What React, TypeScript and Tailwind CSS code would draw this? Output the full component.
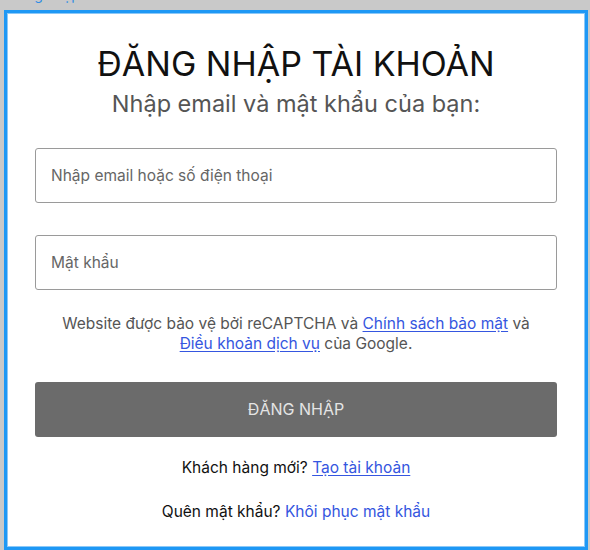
export default function App() {
  return (
    <div className="min-h-screen bg-[#c9c9c9] font-['Inter','Noto_Sans',sans-serif]">
      <div className="h-[10px] overflow-hidden pl-[8px]">
        <a className="-mt-[14px] block text-[14px] leading-[17px] text-[#2f8de4]">Đăng nhập</a>
      </div>
      <div className="ml-[4px] mr-[2px] min-h-[540px] border-[3px] border-[#1e98f5] bg-white px-[28px] pt-[31px] shadow-[inset_0_0_0_1px_#8cc8f7]">
        <h1 className="text-center text-[34px] font-normal leading-[1.2] text-[#111]">ĐĂNG NHẬP TÀI KHOẢN</h1>
        <p className="mt-[5px] text-center text-[23.5px] leading-[1.2] text-[#555]">Nhập email và mật khẩu của bạn:</p>

        <form className="mt-[30px] flex flex-col">
          <input
            type="text"
            placeholder="Nhập email hoặc số điện thoại"
            className="h-[55px] w-full rounded-[3px] border border-[#9a9a9a] px-[15px] text-[15.5px] text-[#333] outline-none placeholder:text-[#666]"
          />
          <input
            type="password"
            placeholder="Mật khẩu"
            className="mt-[32px] h-[55px] w-full rounded-[3px] border border-[#9a9a9a] px-[15px] text-[15.5px] text-[#333] outline-none placeholder:text-[#666]"
          />

          <p className="mt-[24px] text-center text-[15.5px] leading-[20px] text-[#555]">
            Website được bảo vệ bởi reCAPTCHA và{" "}
            <a href="#" className="text-[#3556e0] underline underline-offset-2">Chính sách bảo mật</a> và
            <br />
            <a href="#" className="text-[#3556e0] underline underline-offset-2">Điều khoản dịch vụ</a> của Google.
          </p>

          <button
            type="button"
            className="mt-[28px] h-[55px] w-full rounded-[3px] bg-[#6b6b6b] text-[16px] text-[#e4e4e4]"
          >
            ĐĂNG NHẬP
          </button>

          <p className="mt-[21px] text-center text-[15.5px] leading-[20px] text-[#111]">
            Khách hàng mới?{" "}
            <a href="#" className="text-[#3556e0] underline underline-offset-2">Tạo tài khoản</a>
          </p>
          <p className="mt-[24px] text-center text-[15.5px] leading-[20px] text-[#111]">
            Quên mật khẩu? <a href="#" className="text-[#3556e0]">Khôi phục mật khẩu</a>
          </p>
        </form>
      </div>
    </div>
  );
}
